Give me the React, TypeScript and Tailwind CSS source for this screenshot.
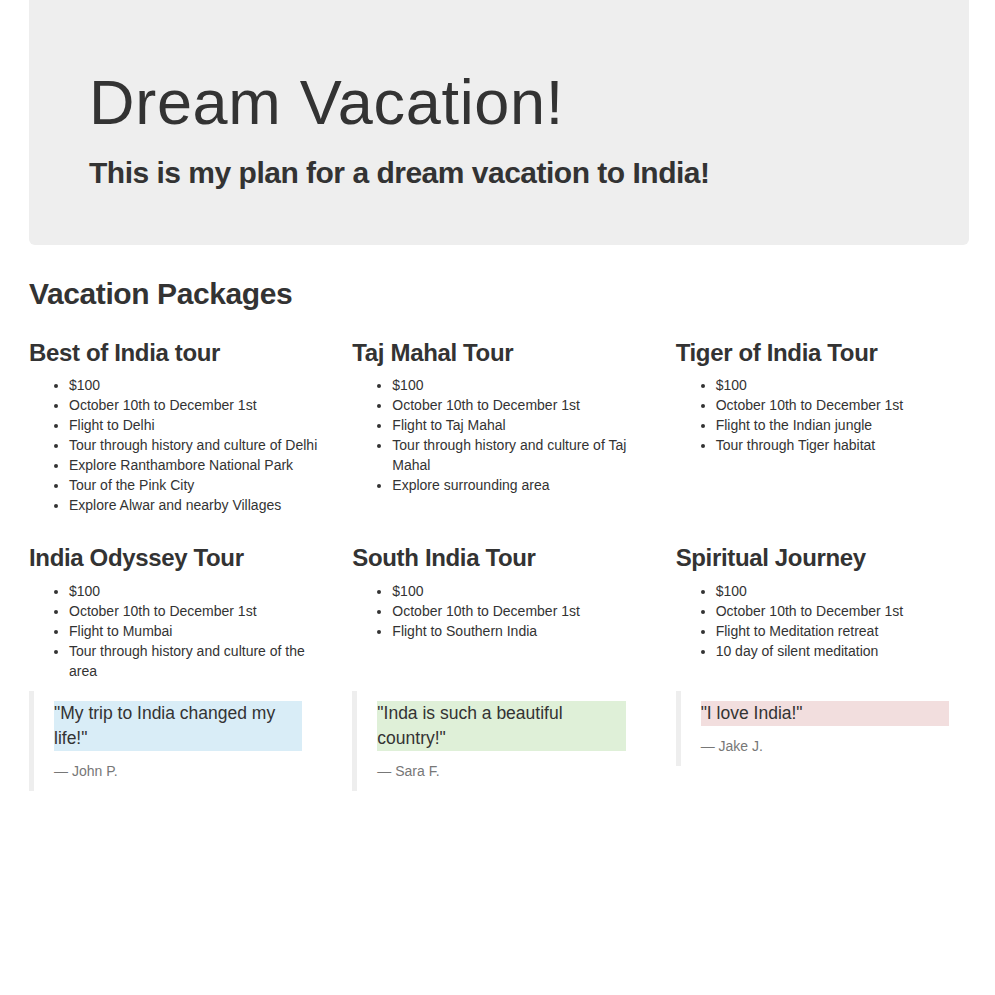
const packages = [
  {
    title: 'Best of India tour',
    items: [
      '$100',
      'October 10th to December 1st',
      'Flight to Delhi',
      'Tour through history and culture of Delhi',
      'Explore Ranthambore National Park',
      'Tour of the Pink City',
      'Explore Alwar and nearby Villages',
    ],
  },
  {
    title: 'Taj Mahal Tour',
    items: [
      '$100',
      'October 10th to December 1st',
      'Flight to Taj Mahal',
      'Tour through history and culture of Taj Mahal',
      'Explore surrounding area',
    ],
  },
  {
    title: 'Tiger of India Tour',
    items: ['$100', 'October 10th to December 1st', 'Flight to the Indian jungle', 'Tour through Tiger habitat'],
  },
];

const morePackages = [
  {
    title: 'India Odyssey Tour',
    items: ['$100', 'October 10th to December 1st', 'Flight to Mumbai', 'Tour through history and culture of the area'],
  },
  {
    title: 'South India Tour',
    items: ['$100', 'October 10th to December 1st', 'Flight to Southern India'],
  },
  {
    title: 'Spiritual Journey',
    items: ['$100', 'October 10th to December 1st', 'Flight to Meditation retreat', '10 day of silent meditation'],
  },
];

const quotes = [
  { quote: '"My trip to India changed my life!"', author: 'John P.', bg: 'bg-[#d9edf7]' },
  { quote: '"Inda is such a beautiful country!"', author: 'Sara F.', bg: 'bg-[#dff0d8]' },
  { quote: '"I love India!"', author: 'Jake J.', bg: 'bg-[#f2dede]' },
];

function PackageList({ title, items }: { title: string; items: string[] }) {
  return (
    <>
      <h3 className="mt-[20px] mb-[9px] text-[24px] leading-[26.4px] font-semibold tracking-[-0.35px]">{title}</h3>
      <ul className="list-disc pl-10 mb-[10px]">
        {items.map((item) => (
          <li key={item} className="text-[14px] leading-[20px]">
            {item}
          </li>
        ))}
      </ul>
    </>
  );
}

export default function App() {
  return (
    <div className="min-h-screen bg-white text-[#333] font-['Liberation_Sans',Arial,sans-serif]">
      <div className="ml-[14px] w-[970px] px-[15px]">
        {/* Jumbotron */}
        <div className="bg-[#eee] rounded-b-[6px] px-[60px] pt-[48px] pb-[48px] mb-[32px]">
          <h1 className="mt-[20px] text-[63px] leading-[69px] font-normal tracking-[0.7px]">Dream Vacation!</h1>
          <h2 className="mt-[19px] mb-[8px] text-[30px] leading-[33px] font-semibold tracking-[-0.5px]">
            This is my plan for a dream vacation to India!
          </h2>
        </div>

        <h2 className="mb-[10px] text-[30px] leading-[33px] font-semibold tracking-[-0.4px]">Vacation Packages</h2>

        <div className="-mx-[15px] grid grid-cols-3">
          {packages.map((p) => (
            <div key={p.title} className="px-[15px]">
              <PackageList title={p.title} items={p.items} />
            </div>
          ))}
        </div>

        <div className="-mx-[15px] grid grid-cols-3">
          {morePackages.map((p) => (
            <div key={p.title} className="px-[15px]">
              <PackageList title={p.title} items={p.items} />
            </div>
          ))}
        </div>

        <div className="-mx-[15px] grid grid-cols-3 items-start">
          {quotes.map((q) => (
            <div key={q.author} className="px-[15px]">
              <blockquote className="border-l-[5px] border-[#eee] py-[10px] px-[20px] mb-[20px] text-[17.5px]">
                <p className={`${q.bg} leading-[25px] mb-[10px]`}>{q.quote}</p>
                <footer className="text-[14px] leading-[20px] text-[#777]">—&nbsp;{q.author}</footer>
              </blockquote>
            </div>
          ))}
        </div>
      </div>
    </div>
  );
}
